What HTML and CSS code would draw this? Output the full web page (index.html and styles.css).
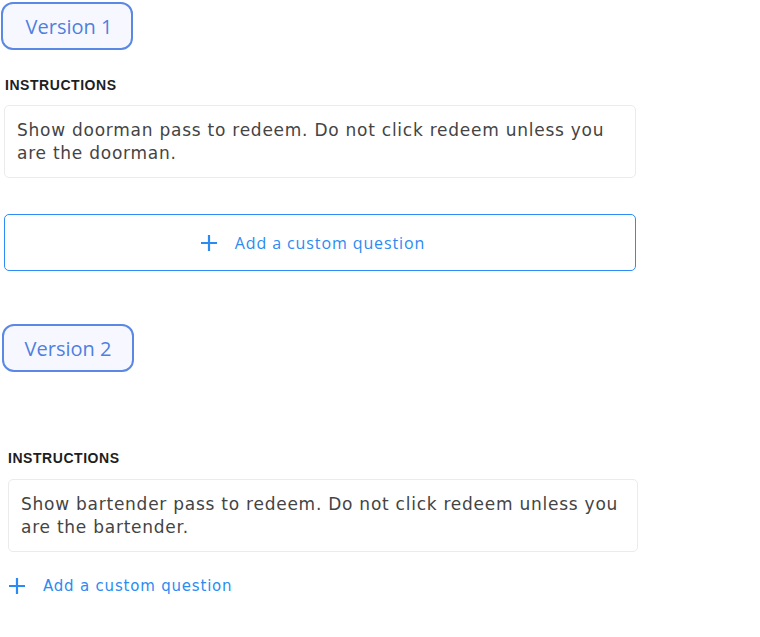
FILE: index.html
```html
<!DOCTYPE html>
<html>
<head>
<meta charset="utf-8">
<link rel="stylesheet" href="styles.css">
</head>
<body>
<section class="version v1">
  <div class="badge">Version 1</div>
  <div class="label">INSTRUCTIONS</div>
  <div class="box">Show doorman pass to redeem. Do not click redeem unless you are the doorman.</div>
  <button class="add-btn">
    <svg class="plus" width="18" height="18" viewBox="0 0 18 18"><path d="M9 1v16M1 9h16" stroke="#2b8bf2" stroke-width="2.2" fill="none"/></svg>
    <span>Add a custom question</span>
  </button>
</section>
<section class="version v2">
  <div class="badge">Version 2</div>
  <div class="inner">
    <div class="label">INSTRUCTIONS</div>
    <div class="box">Show bartender pass to redeem. Do not click redeem unless you are the bartender.</div>
    <div class="add-link">
      <svg class="plus" width="18" height="18" viewBox="0 0 18 18"><path d="M9 1v16M1 9h16" stroke="#2b8bf2" stroke-width="2.2" fill="none"/></svg>
      <span>Add a custom question</span>
    </div>
  </div>
</section>
</body>
</html>
```
FILE: styles.css
```css
html, body { margin: 0; padding: 0; background: #fff; }
body { width: 760px; height: 637px; overflow: hidden; font-family: "Open Sans", sans-serif; }

.badge {
  box-sizing: border-box;
  width: 132px;
  height: 48px;
  margin-left: 1px;
  border: 2px solid #5a88e4;
  border-radius: 12px;
  background: #f7f8ff;
  color: #4f7fdf;
  font-family: "Open Sans", sans-serif;
  font-size: 20px;
  display: flex;
  align-items: center;
  justify-content: center;
}
.v1 .badge { padding-left: 4px; }
.v1 { padding-top: 2px; }
.v1 .label { margin: 27px 0 0 5px; }
.label {
  font-family: "Liberation Sans", Arial, sans-serif;
  font-weight: bold;
  font-size: 14px;
  line-height: 16px;
  color: #1e1e1e;
  letter-spacing: 0.55px;
}
.box {
  box-sizing: border-box;
  width: 632px;
  height: 73px;
  border: 1px solid #ebebeb;
  border-radius: 5px;
  padding: 13px 12px 10px;
  font-family: "DejaVu Sans", sans-serif;
  font-size: 17px;
  letter-spacing: 0.75px;
  line-height: 23px;
  color: #444;
}
.v1 .label + .box { margin: 12px 0 0 4px; }
.add-btn {
  box-sizing: border-box;
  margin: 36px 0 0 4px;
  width: 632px;
  height: 57px;
  border: 1px solid #2d8cf5;
  border-radius: 5px;
  background: #fff;
  display: flex;
  align-items: center;
  justify-content: center;
  gap: 17px;
  padding: 0 15px 0 0;
  font-family: "Open Sans", sans-serif;
  font-size: 16px;
  letter-spacing: 0.9px;
  color: #2b8bf2;
  cursor: pointer;
}
.v2 { margin-top: 53px; padding-left: 1px; }
.v2 .badge { margin-left: 1px; }
.v2 .inner { padding-left: 7px; }
.v2 .label { margin-top: 78px; }
.v2 .box { margin-top: 13px; width: 630px; }
.add-link {
  display: flex;
  align-items: center;
  gap: 17px;
  margin-top: 25px;
  font-family: "DejaVu Sans", sans-serif;
  font-size: 15px;
  letter-spacing: 0.8px;
  color: #2b8bf2;
}
```
